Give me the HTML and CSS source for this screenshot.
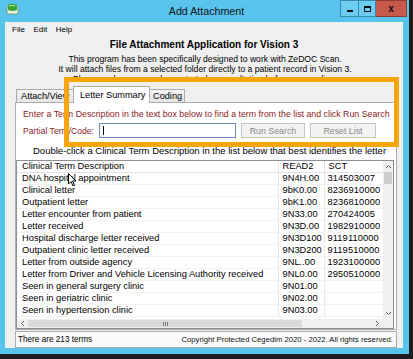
FILE: index.html
```html
<!DOCTYPE html>
<html lang="en">
<head>
	<meta charset="UTF-8">
	<link rel="stylesheet" href="styles.css">
	<title>Add Attachment</title>
</head>
<body>
	<div class="screen">
		<div class="window">
			<div class="titlebar">
				<svg class="app-icon" width="13" height="12" viewBox="0 0 13 12">
					<rect x="1" y="3" width="11" height="8" rx="1" fill="#e8f4e0" stroke="#6a8f5a" stroke-width="0.8"/>
					<path d="M2 2 Q6 -1 11 2 L11 7 Q6 9 2 7 Z" fill="#3aa53a"/>
					<path d="M3 3 Q6 1.5 9 3" stroke="#b8e6a8" stroke-width="1" fill="none"/>
				</svg>
				<div class="title">Add Attachment</div>
				<div class="caption-btns">
					<span class="cap cap-min"><i></i></span>
					<span class="cap cap-max"><i></i></span>
					<span class="cap cap-close">x</span>
				</div>
			</div>
			<div class="client">
				<div class="menubar">
					<span>File</span>
					<span>Edit</span>
					<span>Help</span>
				</div>
				<h1>File Attachment Application for Vision 3</h1>
				<div class="intro">
					<p>This program has been specifically designed to work with ZeDOC Scan.</p>
					<p>It will attach files from a selected folder directly to a patient record in Vision 3.</p>
					<p>Please make sure you have started a consultation before proceeding.</p>
				</div>
				<div class="tabs">
					<div class="tab-strip">
						<div class="tab tab-attach">Attach/View</div>
						<div class="tab active">Letter Summary</div>
						<div class="tab tab-coding">Coding</div>
					</div>
					<div class="tab-page">
						<div class="hint">Enter a Term Description in the text box below to find a term from the list and click Run Search</div>
						<div class="search-row">
							<label class="hint-label">Partial Term/Code:</label>
							<div class="textbox"><span class="caret"></span></div>
							<button class="btn btn-run" disabled>Run Search</button>
							<button class="btn btn-reset" disabled>Reset List</button>
						</div>
						<div class="instruction">Double-click a Clinical Term Description in the list below that best identifies the letter</div>
						<div class="list">
							<div class="rows-area">
								<table class="terms">
									<colgroup>
										<col class="c-desc">
										<col class="c-read">
										<col class="c-sct">
									</colgroup>
									<thead>
										<tr><th>Clinical Term Description</th><th>READ2</th><th class="sct-head">SCT</th></tr>
									</thead>
									<tbody>
										<tr><td>DNA hospital appointment</td><td>9N4H.00</td><td>314503007</td></tr>
										<tr><td>Clinical letter</td><td>9bK0.00</td><td>8236910000</td></tr>
										<tr><td>Outpatient letter</td><td>9bK1.00</td><td>8236810000</td></tr>
										<tr><td>Letter encounter from patient</td><td>9N33.00</td><td>270424005</td></tr>
										<tr><td>Letter received</td><td>9N3D.00</td><td>1982910000</td></tr>
										<tr><td>Hospital discharge letter received</td><td>9N3D100</td><td>9119110000</td></tr>
										<tr><td>Outpatient clinic letter received</td><td>9N3D200</td><td>9119510000</td></tr>
										<tr><td>Letter from outside agency</td><td>9NL..00</td><td>1923100000</td></tr>
										<tr><td>Letter from Driver and Vehicle Licensing Authority received</td><td>9NL0.00</td><td>2950510000</td></tr>
										<tr><td>Seen in general surgery clinic</td><td>9N01.00</td><td></td></tr>
										<tr><td>Seen in geriatric clinic</td><td>9N02.00</td><td></td></tr>
										<tr><td>Seen in hypertension clinic</td><td>9N03.00</td><td></td></tr>
									</tbody>
								</table>
							</div>
							<div class="vscroll">
								<span class="arrow"><svg width="7" height="5" viewBox="0 0 7 5"><path d="M1 4 L3.5 1.5 L6 4" stroke="#606060" fill="none"/></svg></span>
								<span class="vthumb"></span>
								<span class="track"></span>
								<span class="arrow"><svg width="7" height="5" viewBox="0 0 7 5"><path d="M1 1 L3.5 3.5 L6 1" stroke="#606060" fill="none"/></svg></span>
							</div>
							<div class="hscroll">
								<span class="arrow"><svg width="5" height="7" viewBox="0 0 5 7"><path d="M4 1 L1.5 3.5 L4 6" stroke="#606060" fill="none"/></svg></span>
								<span class="hthumb"><i></i><i></i><i></i></span>
								<span class="track"></span>
								<span class="arrow"><svg width="5" height="7" viewBox="0 0 5 7"><path d="M1 1 L3.5 3.5 L1 6" stroke="#606060" fill="none"/></svg></span>
							</div>
							<div class="corner"></div>
						</div>
					</div>
				</div>
				<div class="status">
					<span class="count">There are 213 terms</span>
					<span class="copyright">Copyright Protected Cegedim 2020 - 2022. All rights reserved.</span>
				</div>
			</div>
		</div>
		<div class="highlight"></div>
		<svg class="pointer" width="9" height="14" viewBox="0 0 9 14">
			<path d="M0.5 0.5 L0.5 11 L3 8.5 L5 13 L6.5 12.3 L4.6 8 L8 8 Z" fill="#fff" stroke="#000" stroke-width="1"/>
		</svg>
	</div>
</body>
</html>
```

FILE: styles.css
```css
* {
	box-sizing: border-box;
}

body {
	margin: 0;
	padding: 0;
	background: #1c1c1c;
	font-family: 'Liberation Sans', Arial, Helvetica, sans-serif;
	color: #000;
}

h1, p {
	margin: 0;
	padding: 0;
}

.screen {
	position: relative;
	width: 413px;
	height: 359px;
	overflow: hidden;
}

.window {
	width: 409px;
	height: 354px;
	background: #58c4ee;
	display: flex;
	flex-direction: column;
}

/* title bar */
.titlebar {
	height: 22px;
	display: grid;
	grid-template-columns: 1fr auto 1fr;
	align-items: start;
}
.app-icon {
	margin: 3px 0 0 6px;
}
.title {
	font-size: 10.7px;
	line-height: 23px;
	padding-left: 4px;
	color: #111;
}
.caption-btns {
	display: flex;
	justify-content: flex-end;
	margin-right: 2px;
}
.cap {
	height: 17px;
	border: 1px solid #3a86ad;
	display: flex;
	align-items: center;
	justify-content: center;
	background: #6ccdf0;
}
.cap-min {
	width: 18px;
	border-right: 0;
}
.cap-min i {
	width: 6px;
	height: 2px;
	background: #111;
	margin-top: 4px;
}
.cap-max {
	width: 18px;
}
.cap-max i {
	width: 7px;
	height: 6px;
	border: 1px solid #111;
	border-top-width: 2px;
}
.cap-close {
	width: 31px;
	border-left: 0;
	background: #c8594d;
	border-color: #8e3b32;
	font-size: 10px;
	font-weight: bold;
	color: #111;
	line-height: 1;
}

/* client area */
.client {
	flex: 1;
	margin: 0 6px 6px 5px;
	background: #f0f0f0;
	display: flex;
	flex-direction: column;
}

.menubar {
	height: 14px;
	display: flex;
	align-items: center;
	gap: 8.5px;
	padding: 1px 0 0 7px;
	font-size: 8px;
}

h1 {
	margin-top: 3px;
	font-size: 10px;
	line-height: 12px;
	text-align: center;
	font-weight: bold;
}

.intro {
	margin-top: 3px;
	height: 28px;
	overflow: hidden;
	font-size: 8.6px;
	line-height: 10px;
	text-align: center;
	padding-left: 2px;
}

/* tabs */
.tabs {
	margin: 4px 6px 0 10px;
}
.tab-strip {
	height: 16px;
	display: flex;
	align-items: flex-end;
	padding-left: 1px;
}
.tab {
	height: 13px;
	border: 1px solid #acacac;
	border-bottom: 0;
	background: linear-gradient(#f3f3f3, #e6e6e6);
	font-size: 9.2px;
	line-height: 12px;
	padding: 0 4px;
	white-space: nowrap;
}
.tab-attach {
	width: 57px;
	border-right: 0;
}
.tab-coding {
	width: 35px;
	border-left: 0;
	padding-left: 3px;
}
.tab.active {
	position: relative;
	z-index: 1;
	height: 17px;
	margin-bottom: -1px;
	width: 77px;
	padding: 2px 0 0 6px;
	background: #fff;
}

.tab-page {
	height: 228px;
	border: 1px solid #acacac;
	background: #fff;
	padding-top: 5px;
}

.hint {
	color: #8a1d1d;
	font-size: 8.8px;
	line-height: 12px;
	padding-left: 7px;
	white-space: nowrap;
}

.search-row {
	margin-top: 3px;
	height: 15px;
	display: flex;
	align-items: center;
	padding-left: 7px;
}
.hint-label {
	width: 76px;
	color: #8a1d1d;
	font-size: 8.6px;
	white-space: nowrap;
}
.textbox {
	width: 137px;
	height: 15px;
	border: 1px solid #6f8db0;
	background: #fff;
	padding: 2px 0 0 3px;
}
.caret {
	display: block;
	width: 1px;
	height: 9px;
	background: #000;
}
.btn {
	height: 15px;
	margin-left: 5px;
	border: 1px solid #c4c7c9;
	background: #f2f2f2;
	color: #8a8a8a;
	font-family: inherit;
	font-size: 8.8px;
	padding: 0;
}
.btn-run {
	width: 64px;
}
.btn-reset {
	width: 66px;
}

.instruction {
	margin-top: 7px;
	font-size: 9.5px;
	line-height: 12px;
	padding-left: 17px;
	white-space: nowrap;
}

/* list view */
.list {
	margin-top: 3px;
	width: 378px;
	height: 169px;
	border: 1px solid #8c9096;
	display: grid;
	grid-template-columns: 366px 10px;
	grid-template-rows: 157px 10px;
}
.rows-area {
	overflow: hidden;
	background: #fff;
}
.terms {
	border-collapse: collapse;
	table-layout: fixed;
	width: 366px;
	font-size: 9.3px;
}
.c-desc {
	width: 261px;
}
.c-read {
	width: 46px;
}
.c-sct {
	width: 59px;
}
.terms th, .terms td {
	height: 12px;
	line-height: 11px;
	padding: 0 0 0 4px;
	text-align: left;
	font-weight: normal;
	white-space: nowrap;
	overflow: hidden;
	border-bottom: 1px solid #f2f2f2;
}
.terms td:last-child {
	padding-left: 3px;
	letter-spacing: 0.1px;
}
.terms th {
	height: 11px;
	line-height: 10px;
	border-bottom: 1px solid #e3e3e3;
}
.terms th:first-child, .terms td:first-child {
	padding-left: 5px;
}
.terms td + td, .terms th + th {
	border-left: 1px solid #e6e6e6;
}
.terms th.sct-head {
	border-left: 1px dotted #c8c8c8;
}

.vscroll {
	background: #efefef;
	display: flex;
	flex-direction: column;
}
.vscroll .arrow {
	height: 10px;
	display: flex;
	align-items: center;
	justify-content: center;
}
.vthumb {
	height: 12px;
	margin: 1px 1px 0;
	background: #cdcdcd;
}
.track {
	flex: 1;
}

.hscroll {
	background: #efefef;
	display: flex;
	border-top: 1px solid #fff;
}
.hscroll .arrow {
	width: 11px;
	display: flex;
	align-items: center;
	justify-content: center;
}
.hthumb {
	width: 274px;
	margin: 1px 0;
	background: #dadada;
	display: flex;
	align-items: center;
	justify-content: center;
	gap: 1px;
}
.hthumb i {
	width: 1px;
	height: 4px;
	background: #7a7a7a;
}
.corner {
	background: #efefef;
}

/* status */
.status {
	margin: 1px 6px 0 10px;
	height: 17px;
	border: 1px solid #acacac;
	background: #fafafa;
	display: flex;
	align-items: center;
	justify-content: space-between;
	padding: 0 3px 0 2px;
}
.count {
	font-size: 8.2px;
}
.copyright {
	font-size: 7.7px;
	color: #111;
}

/* annotation over the screenshot */
.highlight {
	position: absolute;
	left: 64px;
	top: 77px;
	width: 335px;
	height: 70px;
	border: 5px solid #f6a50a;
}

.pointer {
	position: absolute;
	left: 68px;
	top: 173px;
}
```
